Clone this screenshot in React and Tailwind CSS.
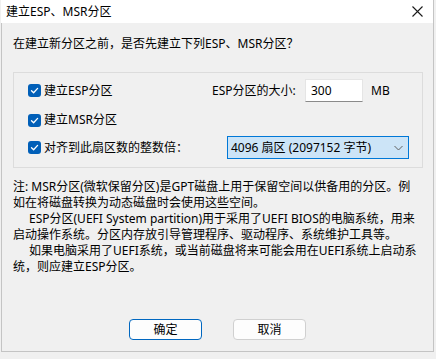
import React from 'react';

const Check = () => (
  <span className="w-[13px] h-[13px] rounded-[3px] bg-[#005fb8] flex items-center justify-center shrink-0">
    <svg width="9" height="9" viewBox="0 0 9 9" fill="none">
      <polyline points="1.5,4.8 3.6,6.8 7.6,2.4" stroke="white" strokeWidth="1.3" strokeLinecap="round" strokeLinejoin="round" />
    </svg>
  </span>
);

const CheckRow = ({ label, className = '' }) => (
  <div className={`flex items-center gap-[3px] ${className}`}>
    <Check />
    <span className="whitespace-nowrap">{label}</span>
  </div>
);

const App = () => {
  return (
    <div
      className="w-[436px] h-[359px] bg-[#f0f0f0] text-[12px] leading-[16px] text-black"
      style={{ fontFamily: '"Noto Sans", "Noto Sans CJK SC", sans-serif' }}
    >
      <div className="ml-px w-[433px] h-[352px] border-x border-b border-[#c4c4c4] flex flex-col">
        {/* title bar */}
        <div className="-ml-px h-[23px] bg-white flex items-center justify-between pl-[5px] pr-[10px]">
          <span>建立ESP、MSR分区</span>
          <svg width="11" height="11" viewBox="0 0 11 11" fill="none">
            <path d="M0.5 0.5 L10.5 10.5 M10.5 0.5 L0.5 10.5" stroke="#1a1a1a" strokeWidth="1.1" />
          </svg>
        </div>

        <div className="pl-[11px] flex flex-col">
          <div className="mt-[13px]">在建立新分区之前，是否先建立下列ESP、MSR分区？</div>

          {/* options group */}
          <div className="mt-[20px] w-[410px] h-[96px] border border-[#dcdcdc] pl-[14px] pt-[6px] flex flex-col">
            <div className="flex items-center h-[23px]">
              <CheckRow label="建立ESP分区" className="w-[184px]" />
              <span className="w-[93px] whitespace-nowrap">ESP分区的大小:</span>
              <div className="w-[58px] h-[23px] bg-white border border-[#e5e5e5] border-b-[#8a8a8a] flex items-center pl-[5px]">300</div>
              <span className="ml-[8px]">MB</span>
            </div>
            <CheckRow label="建立MSR分区" className="mt-[10px] h-[16px]" />
            <div className="mt-[8px] flex items-center h-[23px]">
              <CheckRow label="对齐到此扇区数的整数倍：" className="w-[199px]" />
              <div className="w-[182px] h-[23px] bg-[#cce4f7] border border-[#0078d7] flex items-center justify-between pl-[3px] pr-[5px]">
                <span className="whitespace-nowrap">4096 扇区 (2097152 字节)</span>
                <svg width="9" height="6" viewBox="0 0 9 6" fill="none">
                  <polyline points="0.5,1 4.5,5 8.5,1" stroke="#606060" strokeWidth="1" />
                </svg>
              </div>
            </div>
          </div>

          {/* notes */}
          <div className="mt-[11px] whitespace-nowrap">
            <div>注: MSR分区(微软保留分区)是GPT磁盘上用于保留空间以供备用的分区。例</div>
            <div>如在将磁盘转换为动态磁盘时会使用这些空间。</div>
            <div className="pl-[16px]">ESP分区(UEFI System partition)用于采用了UEFI BIOS的电脑系统，用来</div>
            <div>启动操作系统。分区内存放引导管理程序、驱动程序、系统维护工具等。</div>
            <div className="pl-[16px]">如果电脑采用了UEFI系统，或当前磁盘将来可能会用在UEFI系统上启动系</div>
            <div>统，则应建立ESP分区。</div>
          </div>
        </div>

        {/* buttons */}
        <div className="mt-[44px] flex justify-center gap-[31px]">
          <button className="w-[73px] h-[21px] rounded-[4px] bg-[#fdfdfd] border border-[#0067c0] flex items-center justify-center">确定</button>
          <button className="w-[73px] h-[21px] rounded-[4px] bg-[#fdfdfd] border border-[#d0d0d0] flex items-center justify-center">取消</button>
        </div>
      </div>
    </div>
  );
};

export default App;
